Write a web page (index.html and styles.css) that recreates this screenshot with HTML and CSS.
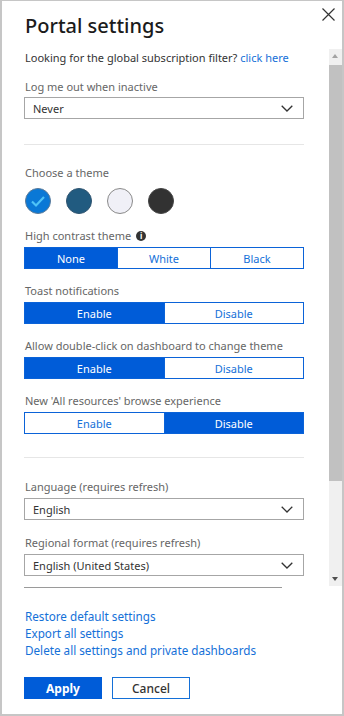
FILE: index.html
```html
<!DOCTYPE html>
<html>
<head>
<meta charset="utf-8">
<link rel="stylesheet" href="styles.css">
</head>
<body>
<div class="blade">
  <header class="head">
    <h1 class="title">Portal settings</h1>
    <button class="close" aria-label="Close">
      <svg width="13" height="13" viewBox="0 0 13 13"><path d="M0.5 0.5L12.5 12.5M12.5 0.5L0.5 12.5" stroke="#333" stroke-width="1.2" fill="none"/></svg>
    </button>
  </header>
  <div class="scroll">
    <div class="content">
      <p class="intro">Looking for the global subscription filter? <a class="link">click here</a></p>

      <div class="field first">
        <div class="label">Log me out when inactive</div>
        <div class="select"><span>Never</span><svg class="chev" width="12" height="7" viewBox="0 0 12 7"><path d="M0.7 0.7L6 6L11.3 0.7" stroke="#333" stroke-width="1.3" fill="none"/></svg></div>
      </div>

      <hr class="divider d1">

      <div class="field">
        <div class="label">Choose a theme</div>
        <div class="themes">
          <span class="swatch azure"><svg width="26" height="26" viewBox="0 0 26 26"><path d="M7 13.5L11 17.5L19 9" stroke="#4fc3f7" stroke-width="2.2" fill="none"/></svg></span>
          <span class="swatch blue"></span>
          <span class="swatch light"></span>
          <span class="swatch dark"></span>
        </div>
      </div>

      <div class="field gapped">
        <div class="label">High contrast theme <span class="info">i</span></div>
        <div class="seg three">
          <span class="on">None</span><span>White</span><span>Black</span>
        </div>
      </div>

      <div class="field gapped">
        <div class="label">Toast notifications</div>
        <div class="seg"><span class="on">Enable</span><span>Disable</span></div>
      </div>

      <div class="field gapped">
        <div class="label">Allow double-click on dashboard to change theme</div>
        <div class="seg"><span class="on">Enable</span><span>Disable</span></div>
      </div>

      <div class="field gapped">
        <div class="label">New 'All resources' browse experience</div>
        <div class="seg"><span>Enable</span><span class="on">Disable</span></div>
      </div>

      <hr class="divider d2">

      <div class="field">
        <div class="label">Language (requires refresh)</div>
        <div class="select"><span>English</span><svg class="chev" width="12" height="7" viewBox="0 0 12 7"><path d="M0.7 0.7L6 6L11.3 0.7" stroke="#333" stroke-width="1.3" fill="none"/></svg></div>
      </div>

      <div class="field gapped2">
        <div class="label">Regional format (requires refresh)</div>
        <div class="select"><span>English (United States)</span><svg class="chev" width="12" height="7" viewBox="0 0 12 7"><path d="M0.7 0.7L6 6L11.3 0.7" stroke="#333" stroke-width="1.3" fill="none"/></svg></div>
      </div>
    </div>
    <div class="scrollbar">
      <span class="arrow up"></span>
      <span class="thumb"></span>
      <span class="track"></span>
      <span class="arrow down"></span>
    </div>
  </div>
  <div class="bottomline"></div>
  <nav class="actions">
    <a class="link">Restore default settings</a>
    <a class="link">Export all settings</a>
    <a class="link">Delete all settings and private dashboards</a>
  </nav>
  <div class="buttons">
    <button class="btn primary">Apply</button>
    <button class="btn secondary">Cancel</button>
  </div>
</div>
</body>
</html>
```

FILE: styles.css
```css
* { box-sizing: border-box; }
html, body { margin: 0; padding: 0; background: #fff; }
body {
  font-family: "Noto Sans", "Open Sans", sans-serif;
  font-size: 11px;
  color: #333;
}
.blade {
  width: 344px;
  height: 716px;
  border: 2px solid #c6c6c6;
  border-top-width: 1px;
  display: flex;
  flex-direction: column;
  padding-left: 22px;
}
.head {
  height: 48px;
  display: flex;
  align-items: flex-start;
  justify-content: space-between;
}
.title {
  margin: 12px 0 0 1px;
  font-size: 20px;
  font-weight: 500;
  line-height: 26px;
  color: #1b1b1b;
}
.close {
  border: 0;
  background: none;
  padding: 0;
  margin: 7px 7px 0 0;
  width: 13px;
  height: 13px;
  display: flex;
}
.scroll {
  display: flex;
  height: 537px;
}
.content {
  width: 280px;
  overflow: hidden;
}
.link { color: #1470d8; text-decoration: none; white-space: nowrap; }
.intro {
  margin: 0;
  line-height: 18px;
  color: #333;
  padding-left: 1px;
  white-space: nowrap;
}
.field { display: flex; flex-direction: column; gap: 2px; }
.field.first { margin-top: 11px; gap: 1px; }
.field.gapped { margin-top: 13px; }
.field.gapped2 { margin-top: 14px; }
.label {
  line-height: 18px;
  color: #666;
  padding-left: 1px;
  display: flex;
  align-items: center;
  gap: 5px;
  white-space: nowrap;
}
.select {
  height: 22px;
  border: 1px solid #a6a6a6;
  display: flex;
  align-items: center;
  justify-content: space-between;
  padding: 0 10px 0 8px;
  color: #333;
}
.divider {
  border: 0;
  border-top: 1px solid #e6e6e6;
  margin: 0;
}
.d1 { margin: 25px 0 19px; }
.d2 { margin: 23px 0 20px; }
.themes {
  display: flex;
  gap: 15px;
  margin-top: 4px;
  padding-left: 1px;
}
.swatch {
  width: 26px;
  height: 26px;
  border-radius: 50%;
  display: block;
  border: 1px solid #777;
}
.swatch svg { display: block; margin: -1px; }
.azure { background: #0a78d6; border-color: #5a7a99; }
.blue { background: #215b80; border-color: #2f5470; }
.light { background: #f0f0f7; border-color: #8a8a8a; }
.dark { background: #323232; border-color: #444; }
.info {
  width: 10px;
  height: 10px;
  border-radius: 50%;
  background: #333;
  color: #fff;
  font-size: 8px;
  font-weight: 700;
  line-height: 10px;
  text-align: center;
  display: inline-block;
}
.seg {
  display: flex;
  height: 22px;
  border: 1px solid #0b63d8;
}
.seg span {
  flex: 1;
  display: flex;
  align-items: center;
  justify-content: center;
  color: #1470d8;
  background: #fff;
}
.seg span + span { border-left: 1px solid #0b63d8; }
.seg span.on { background: #005cd8; color: #fff; }
.scrollbar {
  margin-left: 25px;
  width: 13px;
  display: flex;
  flex-direction: column;
  background: #f0f0f0;
}
.arrow {
  height: 15px;
  position: relative;
  background: #f0f0f0;
}
.arrow::after {
  content: "";
  position: absolute;
  left: 3px;
  border-left: 3.5px solid transparent;
  border-right: 3.5px solid transparent;
}
.arrow.up::after { top: 5px; border-bottom: 4px solid #a3a3a3; }
.arrow.down::after { top: 6px; border-top: 4px solid #505050; }
.thumb { height: 416px; background: #c1c1c1; margin-top: 1px; }
.track { flex: 1; }
.bottomline {
  width: 258px;
  height: 1px;
  background: #9a9a9a;
  margin: 1px 0 0 0;
}
.actions {
  display: flex;
  flex-direction: column;
  align-items: flex-start;
  margin-top: 20px;
  line-height: 17px;
  padding-left: 1px;
  font-size: 11.7px;
}
.buttons {
  display: flex;
  gap: 10px;
  margin-top: 18px;
}
.btn {
  width: 78px;
  height: 22px;
  font-family: inherit;
  font-size: 12px;
  padding: 0;
  cursor: pointer;
}
.primary {
  background: #005cd8;
  border: 1px solid #005cd8;
  color: #fff;
  font-weight: 700;
}
.secondary {
  background: #fff;
  border: 1px solid #1470d8;
  color: #333;
  font-weight: 500;
}
```
